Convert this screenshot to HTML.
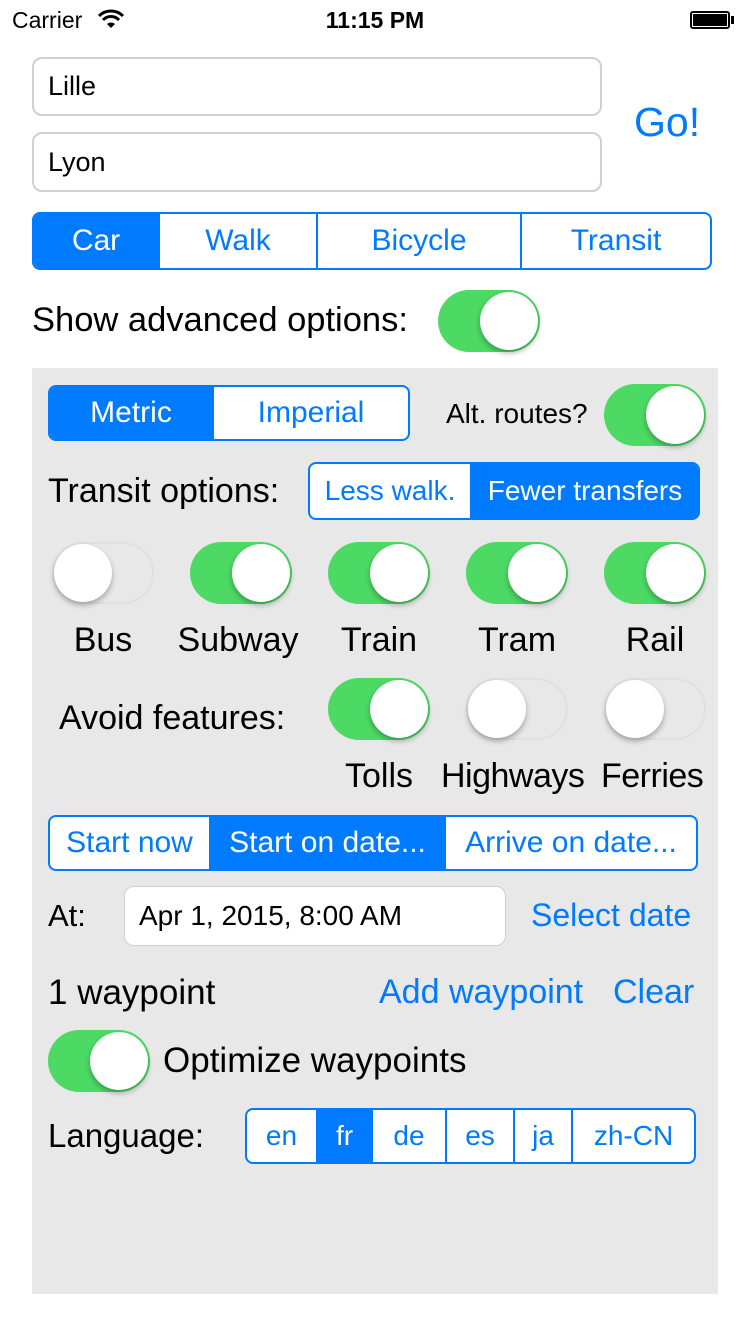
<!DOCTYPE html>
<html><head><meta charset="utf-8"><style>
*{margin:0;padding:0;box-sizing:border-box}
body{width:750px;height:1334px;background:#fff;position:relative;overflow:hidden;font-family:"Liberation Sans",sans-serif;color:#000}
.a{position:absolute}
.t{position:absolute;white-space:nowrap;line-height:1}
.field{position:absolute;background:#fff;border:2px solid #d0d0d0;border-radius:10px;font-size:27px;padding-left:14px;display:flex;align-items:center}
.seg{position:absolute;border:2px solid #007aff;border-radius:8px;display:flex;overflow:hidden;background:#fff}
.seg div{display:flex;align-items:center;justify-content:center;color:#007aff;border-left:2px solid #007aff;white-space:nowrap}
.seg div:first-child{border-left:none}
.seg .s{background:#007aff;color:#fff}
.sw{position:absolute;width:102px;height:62px;border-radius:31px}
.sw.on{background:#4cd964}
.sw.off{background:transparent;border:2px solid #e0e0e0}
.sw .k{position:absolute;top:2px;width:58px;height:58px;border-radius:50%;background:#fff;box-shadow:0 3px 6px rgba(0,0,0,.3)}
.sw.on .k{right:2px}
.sw.off .k{left:0;top:0}
.blue{color:#007aff}
</style></head><body>
<div class="t" style="left:12px;top:9px;font-size:23px">Carrier</div>
<svg class="a" style="left:98px;top:9px" width="26" height="20" viewBox="0 0 26 20"><path d="M1 7a17 17 0 0 1 24 0" stroke="#000" stroke-width="3" fill="none"/><path d="M5 11a11 11 0 0 1 16 0" stroke="#000" stroke-width="3" fill="none"/><path d="M13 19l-4-4a6 6 0 0 1 8 0z" fill="#000"/></svg>
<div class="t" style="left:0;width:750px;text-align:center;top:9px;font-size:23px;font-weight:bold">11:15 PM</div>
<div class="a" style="left:690px;top:11px;width:40px;height:18px;border:2px solid #000;border-radius:3px;padding:1px"><div style="width:100%;height:100%;background:#000"></div></div>
<div class="a" style="left:731px;top:16px;width:3px;height:8px;background:#000"></div>

<div class="field" style="left:32px;top:57px;width:570px;height:59px">Lille</div>
<div class="field" style="left:32px;top:132px;width:570px;height:60px">Lyon</div>
<div class="t blue" style="left:634px;top:102px;font-size:41px">Go!</div>

<div class="seg" style="left:32px;top:212px;width:680px;height:58px;font-size:30px">
<div class="s" style="width:124px">Car</div><div style="width:158px">Walk</div><div style="width:204px">Bicycle</div><div style="flex:1">Transit</div></div>

<div class="t" style="left:32px;top:303px;font-size:34.5px">Show advanced options:</div>
<div class="sw on" style="left:438px;top:290px"><div class="k"></div></div>

<div class="a" style="left:32px;top:368px;width:686px;height:926px;background:#e8e8e8"></div>

<div class="seg" style="left:48px;top:385px;width:362px;height:56px;font-size:30px">
<div class="s" style="width:162px">Metric</div><div style="flex:1">Imperial</div></div>
<div class="t" style="left:446px;top:400px;font-size:28px">Alt. routes?</div>
<div class="sw on" style="left:604px;top:384px"><div class="k"></div></div>

<div class="t" style="left:48px;top:474px;font-size:34px">Transit options:</div>
<div class="seg" style="left:308px;top:462px;width:392px;height:58px;font-size:28px">
<div style="width:160px">Less walk.</div><div class="s" style="flex:1">Fewer transfers</div></div>

<div class="sw off" style="left:52px;top:542px"><div class="k"></div></div>
<div class="sw on" style="left:190px;top:542px"><div class="k"></div></div>
<div class="sw on" style="left:328px;top:542px"><div class="k"></div></div>
<div class="sw on" style="left:466px;top:542px"><div class="k"></div></div>
<div class="sw on" style="left:604px;top:542px"><div class="k"></div></div>
<div class="t" style="left:52px;width:102px;text-align:center;top:623px;font-size:34px">Bus</div>
<div class="t" style="left:158px;width:160px;text-align:center;top:623px;font-size:34px">Subway</div>
<div class="t" style="left:328px;width:102px;text-align:center;top:623px;font-size:34px">Train</div>
<div class="t" style="left:466px;width:102px;text-align:center;top:623px;font-size:34px">Tram</div>
<div class="t" style="left:604px;width:102px;text-align:center;top:623px;font-size:34px">Rail</div>

<div class="t" style="left:59px;top:701px;font-size:34px">Avoid features:</div>
<div class="sw on" style="left:328px;top:678px"><div class="k"></div></div>
<div class="sw off" style="left:466px;top:678px"><div class="k"></div></div>
<div class="sw off" style="left:604px;top:678px"><div class="k"></div></div>
<div class="t" style="left:328px;width:102px;text-align:center;top:759px;font-size:34px">Tolls</div>
<div class="t" style="left:441px;top:759px;font-size:34px;letter-spacing:-0.5px">Highways</div>
<div class="t" style="left:601px;top:759px;font-size:34px;letter-spacing:-0.5px">Ferries</div>

<div class="seg" style="left:48px;top:815px;width:650px;height:56px;font-size:30px">
<div style="width:159px">Start now</div><div class="s" style="width:235px">Start on date...</div><div style="flex:1">Arrive on date...</div></div>

<div class="t" style="left:48px;top:900px;font-size:31px">At:</div>
<div class="field" style="left:124px;top:886px;width:382px;height:60px;font-size:28px;border-width:1px">Apr 1, 2015, 8:00 AM</div>
<div class="t blue" style="left:531px;top:899px;font-size:32px">Select date</div>

<div class="t" style="left:48px;top:975px;font-size:35px">1 waypoint</div>
<div class="t blue" style="left:379px;top:975px;font-size:34px">Add waypoint</div>
<div class="t blue" style="left:613px;top:975px;font-size:34px">Clear</div>

<div class="sw on" style="left:48px;top:1030px"><div class="k"></div></div>
<div class="t" style="left:163px;top:1043px;font-size:35px">Optimize waypoints</div>

<div class="t" style="left:48px;top:1119px;font-size:33px">Language:</div>
<div class="seg" style="left:245px;top:1108px;width:451px;height:56px;font-size:28px">
<div style="width:69px">en</div><div class="s" style="width:55px">fr</div><div style="width:74px">de</div><div style="width:68px">es</div><div style="width:58px">ja</div><div style="flex:1">zh-CN</div></div>
</body></html>
